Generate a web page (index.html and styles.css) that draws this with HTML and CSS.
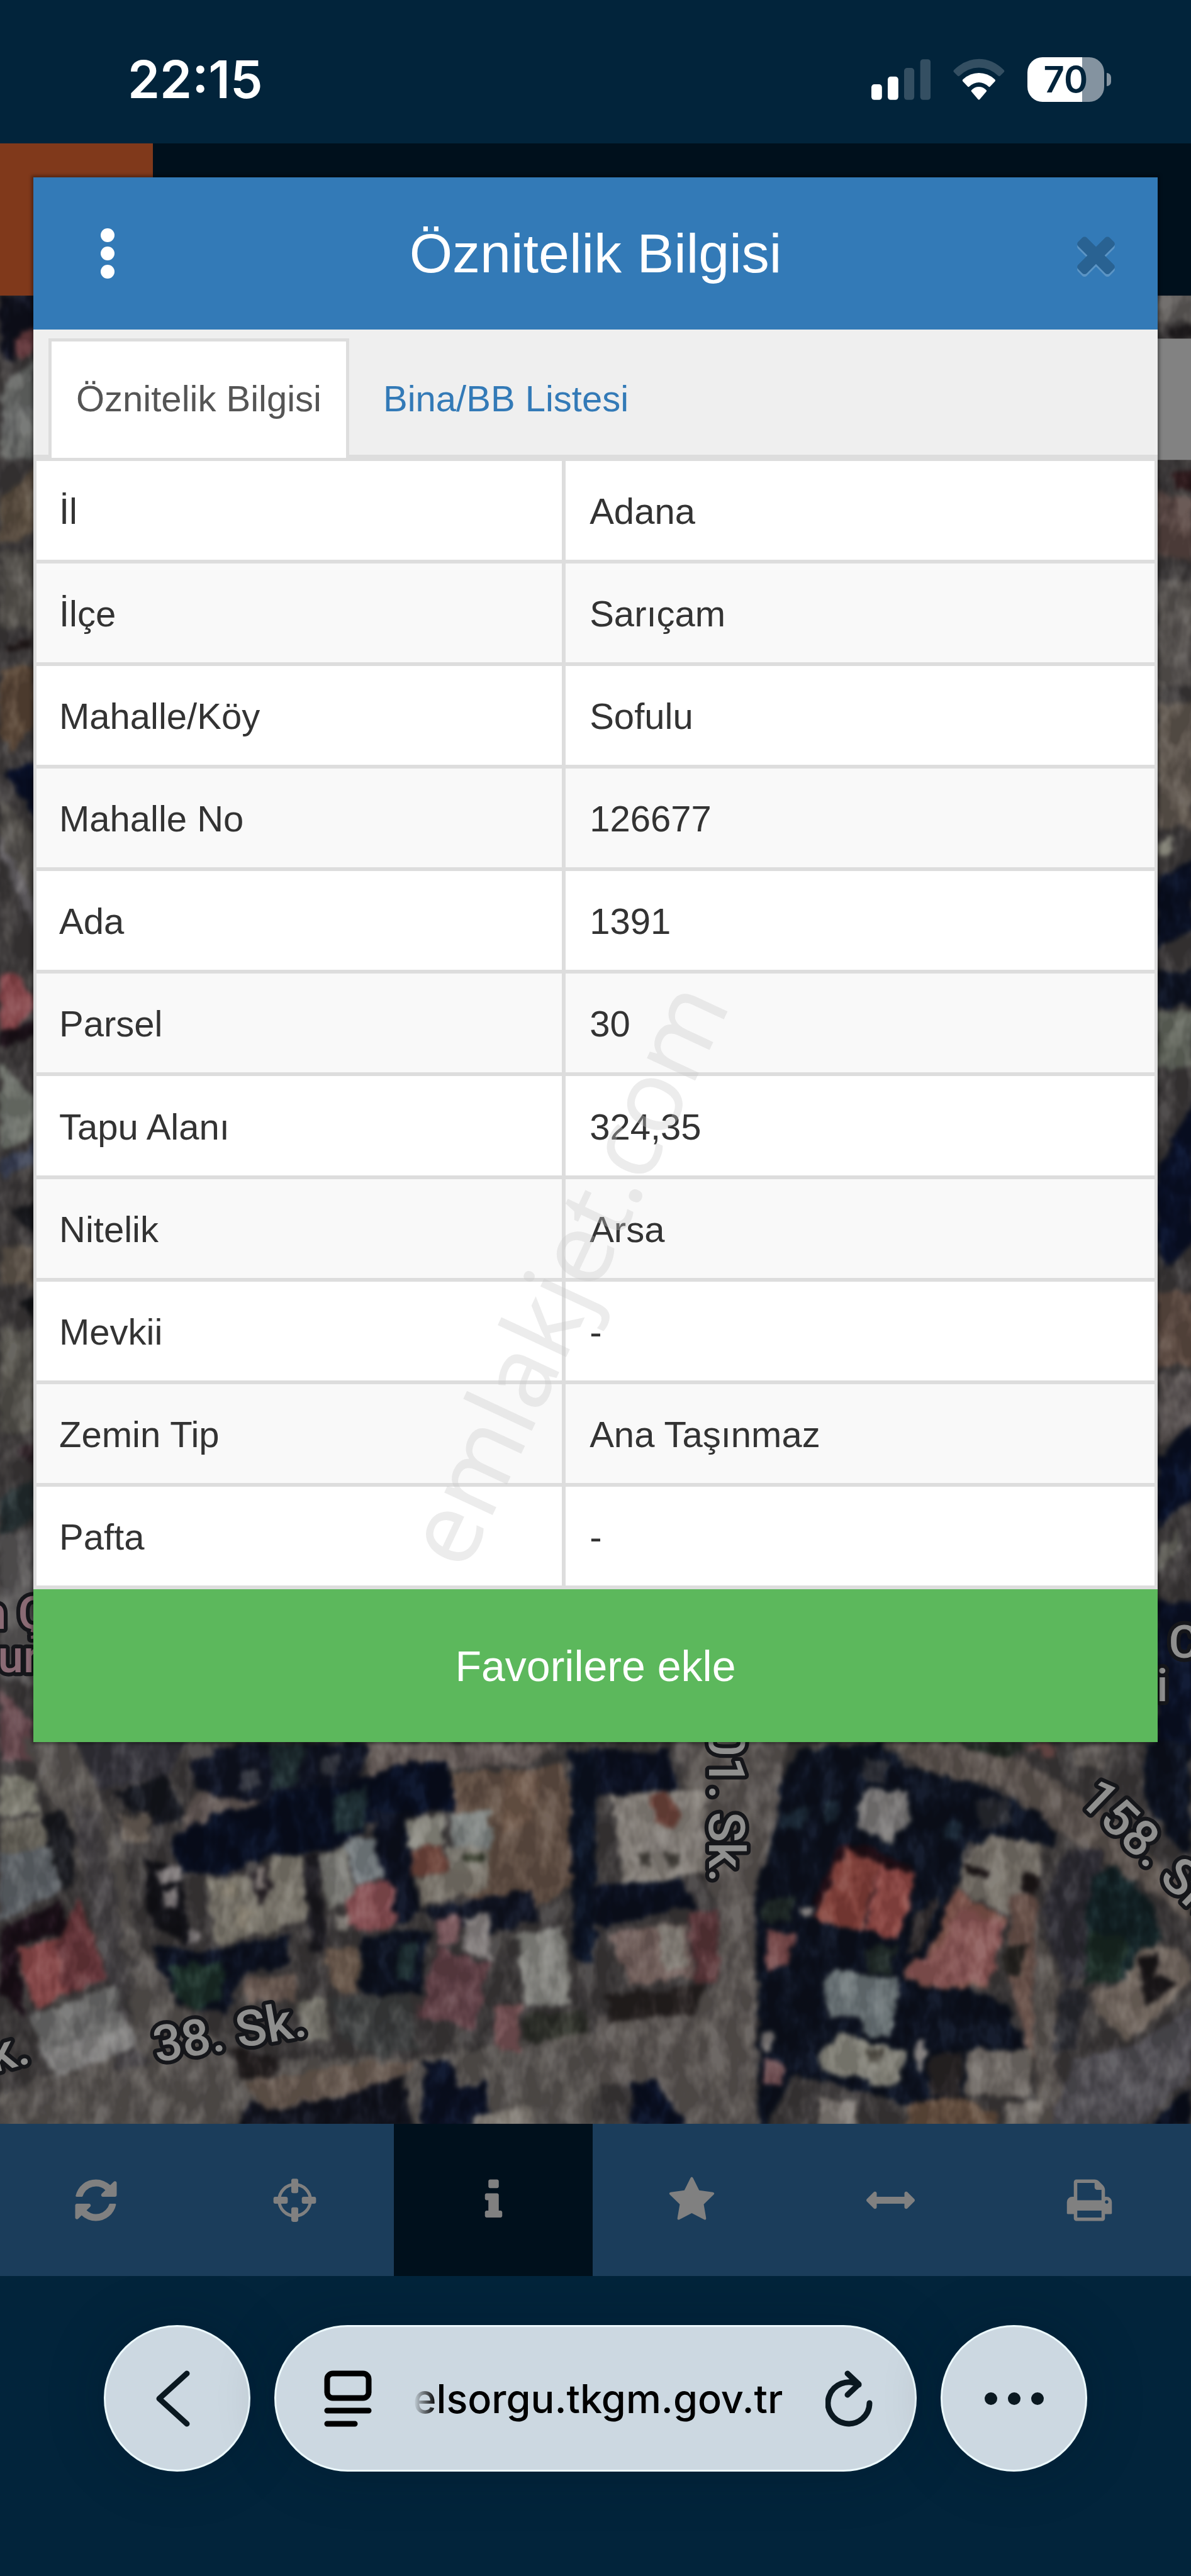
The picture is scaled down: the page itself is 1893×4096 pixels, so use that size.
FILE: index.html
```html
<!DOCTYPE html>
<html lang="tr">
<head>
    <meta charset="UTF-8">
    <meta name="viewport" content="width=device-width, initial-scale=1.0">
    <title>Parsel Sorgu - Öznitelik Bilgisi</title>
    <link rel="stylesheet" href="styles.css">
</head>
<body>
    <div class="status-bar">
        <span class="time">22:15</span>
        <div class="status-icons">
            <svg class="signal" viewBox="161 131 298 224">
                <rect x="161" y="267" width="53" height="78" rx="15"/>
                <rect x="243" y="228" width="53" height="117" rx="15"/>
                <rect class="off" x="325" y="185" width="51" height="160" rx="15"/>
                <rect class="off" x="406" y="141" width="52" height="204" rx="15"/>
            </svg>
            <svg class="wifi" viewBox="570 131 258 224">
                <path class="off" d="M573 205q-4-5 1-10q57-55 125-55t125 55q5 5 1 10l-19 19q-5 5-10 0q-44-41-97-41t-97 41q-5 5-10 0z"/>
                <path d="M618 252q-4-5 1-10q36-32 80-32t80 32q5 5 1 10l-24 25q-4 5-9 1q-22-21-48-21t-48 21q-5 4-9-1z"/>
                <path d="M662 304q-4-4 0-8q16-17 37-17t37 17q4 4 0 8l-33 38q-4 4-8 0z"/>
            </svg>
            <div class="battery"><span class="battery-level">70</span></div>
        </div>
    </div>

    <main class="site">
        <header class="site-header"><div class="logo"></div></header>

        <svg class="map" viewBox="0 529 2130 3271" preserveAspectRatio="xMidYMid slice">
            <defs>
                <filter id="rough" x="0" y="0" width="100%" height="100%" color-interpolation-filters="sRGB">
                    <feTurbulence type="fractalNoise" baseFrequency="0.04" numOctaves="3" seed="4" result="n"/>
                    <feDisplacementMap in="SourceGraphic" in2="n" scale="24" xChannelSelector="R" yChannelSelector="G"/>
                    <feGaussianBlur stdDeviation="4"/>
                    <feColorMatrix type="saturate" values="0.9"/>
                </filter>
                <filter id="grain" x="0" y="0" width="100%" height="100%" color-interpolation-filters="sRGB">
                    <feTurbulence type="fractalNoise" baseFrequency="0.03 0.018" numOctaves="3" seed="9"/>
                    <feColorMatrix type="matrix" values="2.6 0 0 0 -0.95  2.6 0 0 0 -0.96  2.5 0 0.1 0 -0.95  0 0 0 0 1"/>
                </filter>
            </defs>
            <g filter="url(#rough)">
                <rect x="-60" y="460" width="2250" height="3400" fill="#3f3c3c"/>

                <!-- left edge of the map -->
                <g transform="translate(0 500) scale(.3333 1.69)">
                    <path fill="#10121f" d="M0 15H200V50L60 90L0 75z"/>
                    <path fill="#6e3f43" d="M70 62L200 50V75L90 82z"/>
                    <path fill="#696b69" d="M20 110L200 85V190H0z"/>
                    <path fill="#5e5142" d="M0 235L200 195V270L0 280z"/>
                    <path fill="#5a5751" d="M0 290H200V370H0z"/>
                    <path fill="#1f1717" d="M40 390L180 378V388L60 396z"/>
                    <path fill="#5d4938" d="M0 410H200V470L60 500L0 480z"/>
                    <path fill="#08102a" d="M30 522L200 510V572L110 550z"/>
                    <path fill="#56534e" d="M0 550L200 590V660L0 600z"/>
                    <path fill="#6a676a" d="M0 590L200 660V690L0 610z"/>
                    <path fill="#8b464b" d="M0 735H80L190 765L80 795L0 792z"/>
                    <path fill="#1d1219" d="M0 795L200 785V802L0 812z"/>
                    <path fill="#73776f" d="M0 830L200 870V905L0 925z"/>
                    <path fill="#3c4358" d="M0 935L200 915V935L0 950z"/>
                    <path fill="#17181c" d="M60 985L200 975V1010L100 1000z"/>
                    <path fill="#141518" d="M95 1085L200 1072V1100z"/>
                    <path fill="#63594e" d="M0 1025H200V1065H0z"/>
                    <path fill="#57554e" d="M0 1110H200V1220H0z"/>
                    <path fill="#32252a" d="M100 1240L200 1225V1260z"/>
                    <path fill="#253032" d="M0 1290L200 1270V1310L0 1330z"/>
                    <path fill="#5c5a5a" d="M0 1330L200 1320V1490L0 1480z"/>
                    <path fill="#6d4d53" d="M0 1490L180 1530V1568H0z"/>
                </g>

                <!-- right edge of the map -->
                <g transform="translate(2030 500) scale(.3333 1.69)">
                    <path fill="#625f5d" d="M110 15H320V45H110z"/>
                    <path fill="#1e1b1d" d="M180 50H320V62H180z"/>
                    <path fill="#2c181a" d="M180 205L320 200V225L220 222z"/>
                    <path fill="#5b4944" d="M110 225L320 235V300L110 290z"/>
                    <path fill="#5b5754" d="M110 320H320V430H110z"/>
                    <path fill="#625950" d="M110 450H320V580H110z"/>
                    <path fill="#807f73" d="M110 600L200 590V605L110 612z"/>
                    <path fill="#091024" d="M110 635L320 612V690L110 710z"/>
                    <path fill="#0c1222" d="M110 730H320V770H110z"/>
                    <path fill="#65695f" d="M110 775H320V835H110z"/>
                    <path fill="#09112a" d="M110 945L320 870V1020L160 1050L110 1010z"/>
                    <path fill="#624f45" d="M110 1070H320V1150H110z"/>
                    <path fill="#5b5554" d="M110 1160H320V1210L110 1240z"/>
                    <path fill="#081027" d="M110 1250L320 1210V1290L110 1320z"/>
                    <path fill="#6a6961" d="M110 1350L240 1325V1345L110 1370z"/>
                    <path fill="#0a1228" d="M110 1400H320V1568H110z"/>
                </g>

                <!-- lower left block -->
                <g transform="translate(0 3080) scale(.679 .4847)">
                    <path fill="#5a5653" d="M60 60L200 60L330 500L350 760L480 1060L620 1250L1100 1240L1568 1150V1500H0V1380L330 1200L360 900L200 520z"/>
                    <path fill="#484547" d="M190 300L260 330L320 760L340 1180L400 1260L300 1300L290 940L230 640z"/>
                    <path fill="#37363e" d="M190 60H500L440 200L260 250z"/>
                    <path fill="#101423" d="M500 150L620 80H970L930 330L700 380L640 290L520 260z"/>
                    <path fill="#1c2b30" d="M710 80H800L790 230L720 250z"/>
                    <path fill="#3c3f49" d="M640 180L690 170L680 240L630 250zM850 120L910 130L880 200L840 190z"/>
                    <path fill="#161820" d="M300 270L430 190L500 380L400 380z"/>
                    <path fill="#665b57" d="M490 280L560 270L690 300L550 420H480z"/>
                    <path fill="#6b6158" d="M310 350L400 350L390 450L320 440z"/>
                    <path fill="#655b57" d="M970 75H1470L1400 150L970 200z"/>
                    <path fill="#665346" d="M1190 190L1480 160L1530 470L1520 600L1400 700L1200 640z"/>
                    <path fill="#735c4c" d="M1330 200L1420 190L1400 380L1320 420z"/>
                    <path fill="#080f22" d="M450 440L560 340L690 320L720 260L900 230L980 200L1080 150L1180 150L1200 330L1010 350L900 460L820 480L700 500L580 570L480 560z"/>
                    <path fill="#1f3137" d="M880 280L970 240L960 400L880 420z"/>
                    <path fill="#0c1120" d="M980 330H1180L1070 360L1110 700L1040 760L1000 560z"/>
                    <path fill="#8a897f" d="M1070 370L1165 345L1175 450L1160 470L1075 460z"/>
                    <path fill="#7f8482" d="M1190 335L1285 325L1300 460L1195 465z"/>
                    <path fill="#75493f" d="M1085 470L1170 460L1180 560L1090 570z"/>
                    <path fill="#7b756b" d="M1100 575L1290 530L1285 620L1110 675z"/>
                    <path fill="#7d7a70" d="M1180 460H1290V540L1180 560z"/>
                    <path fill="#373c2c" d="M1215 490L1270 480L1275 520L1220 530z"/>
                    <path fill="#101422" d="M1110 690L1400 620L1420 740L1290 780L1150 740z"/>
                    <path fill="#131318" d="M380 500L480 560L500 830L400 760z"/>
                    <path fill="#858080" d="M415 545L475 530V590L420 610zM430 620L465 610L460 690L435 700zM500 770L525 780L520 820L495 810z"/>
                    <path fill="#7b776c" d="M545 590L655 570L670 620L720 500L795 490L810 740L570 825z"/>
                    <path fill="#8a8272" d="M585 610L620 605L625 640L590 650zM640 680L670 700L640 770L620 740z"/>
                    <path fill="#252024" d="M655 570L700 530L720 620L680 680z"/>
                    <path fill="#8a817c" d="M675 540L695 535L700 620L680 640z"/>
                    <path fill="#1b1a20" d="M795 490L840 490L860 850H820z"/>
                    <path fill="#7c7c76" d="M840 490L915 455L925 670L860 690z"/>
                    <path fill="#788084" d="M915 435L985 430L1010 585L930 590z"/>
                    <path fill="#8b5054" d="M930 600L1030 590L1045 750L960 775L900 750z"/>
                    <path fill="#8f8b84" d="M890 720L925 720L915 770L885 765z"/>
                    <path fill="#0c1222" d="M410 820L520 850L760 790L770 900L640 930L600 1080L480 1040L420 930z"/>
                    <path fill="#1b302a" d="M440 900L590 890L580 1030L510 1070L460 1000z"/>
                    <path fill="#6c5c53" d="M650 950L780 930V1030L650 1040z"/>
                    <path fill="#6b5a4c" d="M860 840L950 830L940 1010L860 960z"/>
                    <path fill="#0c1220" d="M950 790L1130 770L1110 1010H950z"/>
                    <path fill="#203338" d="M1050 830L1100 820L1080 940L1040 960z"/>
                    <path fill="#825d62" d="M1155 730L1215 720L1205 830L1150 830z"/>
                    <path fill="#878281" d="M1220 720L1290 710V880L1220 850z"/>
                    <path fill="#66434a" d="M1150 840L1290 890L1250 1140L1100 1090z"/>
                    <path fill="#7b5558" d="M1305 1060L1370 1050V1220L1310 1210z"/>
                    <path fill="#868681" d="M1360 780L1480 760L1505 1040L1385 1050z"/>
                    <path fill="#3f4141" d="M870 1020L1080 1010L1100 1210L1000 1240L900 1170z"/>
                    <path fill="#2e3029" d="M1380 1080L1540 1070L1550 1160L1390 1180z"/>
                    <path fill="#727067" d="M780 1030L860 1020L870 1170L800 1180z"/>
                    <path fill="#0b1324" d="M1500 110H1568V900L1510 870z"/>
                    <path fill="#7f7e72" d="M0 200L90 210L100 320L0 370z"/>
                    <path fill="#68655b" d="M0 380L110 340L140 470L0 480z"/>
                    <path fill="#1a1b20" d="M120 340L160 330L205 450L180 640L120 560z"/>
                    <path fill="#62676c" d="M0 480L140 470L160 620L0 740z"/>
                    <path fill="#1c1018" d="M0 770L160 660L180 770L40 830L70 1100L0 1010z"/>
                    <path fill="#8e4b4c" d="M40 840L150 800L170 1010L90 1060z"/>
                    <path fill="#6c383c" d="M150 800L210 650L240 790L290 940L165 1020z"/>
                    <path fill="#6e6e6d" d="M80 1080L300 980L330 1130L110 1230z"/>
                    <path fill="#848382" d="M110 1230L335 1120L360 1200L140 1320z"/>
                    <path fill="#211d1d" d="M610 1200L730 1240L740 1330L630 1310z"/>
                    <path fill="#6a5c52" d="M640 1330L900 1270L1100 1250L1020 1350L700 1440z"/>
                    <path fill="#0a1125" d="M1120 1260L1190 1250L1210 1350L1280 1330L1290 1500H1110z"/>
                    <path fill="#11131e" d="M630 1500L650 1400L720 1440L890 1390L1060 1310L1090 1500z"/>
                    <path fill="#7f7a72" d="M1240 1500L1260 1450L1400 1420L1410 1500z"/>
                </g>

                <!-- lower right block -->
                <g transform="translate(1065 3080) scale(.679 .4847)">
                    <path fill="#5c5754" d="M210 60H500L480 380L420 620L420 1500H240L200 1400L90 1330L0 1350V1100L300 1000L330 720L290 600z"/>
                    <path fill="#0b1123" d="M0 100L190 110L220 260L0 270z"/>
                    <path fill="#86817a" d="M45 275L290 255V560L70 600z"/>
                    <path fill="#73473d" d="M150 280L190 260L230 350L210 400L160 370z"/>
                    <path fill="#3c3933" d="M110 480L150 470L145 545L120 545zM185 480L220 490L215 545L190 540z"/>
                    <path fill="#0b1122" d="M0 600L220 580L270 680L0 760z"/>
                    <path fill="#73605b" d="M35 780L240 740L260 940L90 980z"/>
                    <path fill="#807a72" d="M160 760L230 750L240 900L180 930z"/>
                    <path fill="#5e383c" d="M245 700L320 690L330 960L265 970z"/>
                    <path fill="#282322" d="M20 1010L290 970L260 1080L40 1110z"/>
                    <path fill="#0c1220" d="M540 100L750 80L830 170L1000 230L1200 360L1210 470L1090 430L980 460L900 800L980 980L1080 1040L1140 1210L980 1220L970 1420H850L800 1400L520 1300L450 1500H430L430 1130L420 640L480 380L480 240z"/>
                    <path fill="#1b2a3a" d="M490 340L560 310L550 390L490 400zM600 300L640 290L635 370L605 380zM920 370L960 360L950 440L915 450z"/>
                    <path fill="#2b2d35" d="M700 130L770 150L760 230L700 200zM1000 290L1090 290L1100 380L1010 400z"/>
                    <path fill="#202b29" d="M450 660L530 650L510 730L440 740zM710 840L790 820L780 930L720 930z"/>
                    <path fill="#2c2829" d="M850 700L910 640L860 850L820 860zM880 1230L970 1220L960 1400L880 1380z"/>
                    <path fill="#605751" d="M760 70L940 80L1130 140L1230 240L1400 400L1568 640V740L1450 620L1300 480L1210 390L1080 250L850 170z"/>
                    <path fill="#202823" d="M940 80H1180L1090 130L1010 110z"/>
                    <path fill="#76514f" d="M1120 85H1220L1200 135z"/>
                    <path fill="#67615c" d="M1270 90L1360 85L1330 180L1260 160z"/>
                    <path fill="#0c1220" d="M1450 80H1568V500L1500 420L1440 250z"/>
                    <path fill="#7b7978" d="M690 320L720 240L820 260L830 360L780 450L690 390z"/>
                    <path fill="#240f17" d="M640 470L700 450L840 550L820 560L660 490L590 690L580 660z"/>
                    <path fill="#87423b" d="M655 475L750 520L700 780L580 730z"/>
                    <path fill="#944a46" d="M750 520L850 570L790 805L710 770z"/>
                    <path fill="#82564c" d="M945 620L1080 730L1030 980L860 985L810 930L830 870L875 880z"/>
                    <path fill="#8d5857" d="M960 690L1080 740L1040 960L870 980L820 930L830 880L890 870z"/>
                    <path fill="#787269" d="M970 510L1040 420L1170 450L1180 560L1090 720L950 620z"/>
                    <path fill="#1f191a" d="M970 520L1040 560L1030 580L960 540zM1130 560L1170 580L1160 650L1120 620z"/>
                    <path fill="#6e564d" d="M1095 640L1170 650L1150 1100L1180 1270L1140 1220L1090 960z"/>
                    <path fill="#5c5652" d="M1160 720L1220 960L1210 1220L1240 1500H1170L1150 1100z"/>
                    <path fill="#24221f" d="M1085 830L1145 830L1120 930L1070 920z"/>
                    <path fill="#7b4a4b" d="M450 770L530 790L510 890L455 930z"/>
                    <path fill="#6f4c50" d="M445 1250L500 1270L490 1340L440 1335z"/>
                    <path fill="#817d7c" d="M535 680L575 680L570 720L540 715zM440 1150L465 1150V1215H440zM850 1175L872 1175L860 1280L845 1280z"/>
                    <path fill="#6c7679" d="M600 960L640 910L720 940L800 950L780 1170L710 1160L700 1100L610 1080z"/>
                    <path fill="#85847a" d="M590 1220L640 1155L820 1210L790 1350L590 1290z"/>
                    <path fill="#4d4a41" d="M715 1215L760 1210L755 1255L720 1260z"/>
                    <path fill="#756f69" d="M980 1215H1150L1140 1390L975 1370z"/>
                    <path fill="#827c76" d="M590 1390L690 1410V1500H580z"/>
                    <path fill="#66503f" d="M820 1410L970 1390L1060 1450V1500H820z"/>
                    <path fill="#7a756f" d="M1080 1410L1170 1400V1500H1080z"/>
                    <path fill="#2e2d35" d="M1240 480L1340 470L1330 560L1290 700L1290 940L1240 970L1180 750L1190 620z"/>
                    <path fill="#122226" d="M1310 560L1370 540L1470 680L1490 800L1400 960L1290 950L1290 720z"/>
                    <path fill="#1a2b25" d="M1290 780L1400 790L1390 950L1290 970z"/>
                    <path fill="#2b2c33" d="M1230 980L1300 1000L1260 1210L1210 1220z"/>
                    <path fill="#746960" d="M1310 990L1400 960L1440 820L1500 830L1568 880V960L1470 1110L1400 1180L1310 1060z"/>
                    <path fill="#1b181a" d="M1430 880L1480 850L1470 940L1540 960L1450 1060z"/>
                    <path fill="#535157" d="M1420 1200L1568 1050V1300L1430 1500H1200L1260 1250z"/>
                    <path fill="#0a0f1e" d="M1490 1440L1568 1340V1500H1470z"/>
                    <path fill="#091024" d="M100 1340L160 1320L240 1500H90z"/>
                </g>
            </g>
            <rect class="grain" x="0" y="529" width="2130" height="3271" filter="url(#grain)"/>
            <rect x="2036" y="606" width="94" height="217" fill="#828282"/>
            <g class="street">
                <text transform="translate(280 3690) rotate(-10)">38. Sk.</text>
                <text transform="translate(-12 3709) rotate(-15)">k.</text>
                <text transform="translate(1268 3368) rotate(90)" text-anchor="end">101. Sk.</text>
                <text transform="translate(1926 3222) rotate(44)">158. Sk.</text>
                <text class="place" x="-34" y="2914">n Ç</text>
                <text class="place" x="-4" y="2992">ur</text>
                <text class="place white" x="2090" y="2966">C</text>
                <text class="place white" x="2068" y="3044">i</text>
            </g>
        </svg>

        <nav class="toolbar">
            <div class="tools">
                <button class="tool" aria-label="Yenile"><svg viewBox="0 0 1792 1792"><path d="M1639 1056q0 5-1 7-64 268-268 434.500t-478 166.500q-146 0-282.500-55t-243.500-157l-129 129q-19 19-45 19t-45-19-19-45v-448q0-26 19-45t45-19h448q26 0 45 19t19 45-19 45l-137 137q71 66 161 102t187 36q134 0 250-65t186-179q11-17 53-117 8-23 30-23h192q13 0 22.500 9.500t9.500 22.500zm25-800v448q0 26-19 45t-45 19h-448q-26 0-45-19t-19-45 19-45l138-138q-148-137-349-137-134 0-250 65t-186 179q-11 17-53 117-8 23-30 23h-199q-13 0-22.500-9.500t-9.500-22.500v-7q65-268 270-434.500t480-166.500q146 0 284 55.500t245 156.500l130-129q19-19 45-19t45 19 19 45z"/></svg></button>
                <button class="tool" aria-label="Konum"><svg viewBox="0 0 1792 1792"><circle cx="896" cy="896" r="580" fill="none" stroke="#808080" stroke-width="116"/><rect x="768" y="96" width="256" height="540" rx="70"/><rect x="768" y="1156" width="256" height="540" rx="70"/><rect x="108" y="768" width="528" height="256" rx="70"/><rect x="1156" y="768" width="528" height="256" rx="70"/></svg></button>
                <button class="tool active" aria-label="Bilgi"><svg viewBox="0 0 1792 1792"><path d="M1216 1344v128q0 26-19 45t-45 19h-512q-26 0-45-19t-19-45v-128q0-26 19-45t45-19h64v-384h-64q-26 0-45-19t-19-45v-128q0-26 19-45t45-19h384q26 0 45 19t19 45v576h64q26 0 45 19t19 45zm-128-1152v192q0 26-19 45t-45 19h-256q-26 0-45-19t-19-45v-192q0-26 19-45t45-19h256q26 0 45 19t19 45z"/></svg></button>
                <button class="tool" aria-label="Favoriler"><svg viewBox="0 0 1792 1792"><path d="M1728 647q0 22-26 48l-363 354 86 500q1 7 1 20 0 21-10.500 35.500t-30.500 14.500q-19 0-40-12l-449-236-449 236q-22 12-40 12-21 0-31.500-14.500t-10.500-35.500q0-6 2-20l86-500-364-354q-25-27-25-48 0-37 56-46l502-73 225-455q19-41 49-41t49 41l225 455 502 73q56 9 56 46z"/></svg></button>
                <button class="tool" aria-label="Ölç"><svg viewBox="0 0 1792 1792"><path d="M1792 896q0 26-19 45l-256 256q-19 19-45 19t-45-19-19-45v-128h-1024v128q0 26-19 45t-45 19-45-19l-256-256q-19-19-19-45t19-45l256-256q19-19 45-19t45 19 19 45v128h1024v-128q0-26 19-45t45-19 45 19l256 256q19 19 19 45z"/></svg></button>
                <button class="tool" aria-label="Yazdır"><svg viewBox="0 0 1792 1792"><path d="M448 1536h896v-256h-896v256zm0-640h896v-384h-160q-40 0-68-28t-28-68v-160h-640v640zm1152 64q0-26-19-45t-45-19-45 19-19 45 19 45 45 19 45-19 19-45zm128 0v416q0 13-9.500 22.500t-22.500 9.500h-224v160q0 40-28 68t-68 28h-960q-40 0-68-28t-28-68v-160h-224q-13 0-22.500-9.500t-9.500-22.500v-416q0-79 56.500-135.500t135.500-56.500h64v-544q0-40 28-68t68-28h672q40 0 88 20t76 48l152 152q28 28 48 76t20 88v256h64q79 0 135.500 56.500t56.500 135.500z"/></svg></button>
            </div>
        </nav>

        <section class="modal">
            <div class="modal-header">
                <button class="menu" aria-label="Menü"><svg viewBox="0 0 22 80"><circle cx="11" cy="11" r="11"/><circle cx="11" cy="40" r="11"/><circle cx="11" cy="69" r="11"/></svg></button>
                <h1>Öznitelik Bilgisi</h1>
                <button class="close" aria-label="Kapat"><svg viewBox="0 0 1792 1792"><path d="M1490 1322q0 40-28 68l-136 136q-28 28-68 28t-68-28l-294-294-294 294q-28 28-68 28t-68-28l-136-136q-28-28-28-68t28-68l294-294-294-294q-28-28-28-68t28-68l136-136q28-28 68-28t68 28l294 294 294-294q28-28 68-28t68 28l136 136q28 28 28 68t-28 68l-294 294 294 294q28 28 28 68z"/></svg></button>
            </div>
            <div class="tabs">
                <a class="tab active" href="#oznitelik">Öznitelik Bilgisi</a>
                <a class="tab" href="#bina">Bina/BB Listesi</a>
            </div>
            <table class="info" id="oznitelik">
                <tr><th scope="row">İl</th><td>Adana</td></tr>
                <tr><th scope="row">İlçe</th><td>Sarıçam</td></tr>
                <tr><th scope="row">Mahalle/Köy</th><td>Sofulu</td></tr>
                <tr><th scope="row">Mahalle No</th><td>126677</td></tr>
                <tr><th scope="row">Ada</th><td>1391</td></tr>
                <tr><th scope="row">Parsel</th><td>30</td></tr>
                <tr><th scope="row">Tapu Alanı</th><td>324,35</td></tr>
                <tr><th scope="row">Nitelik</th><td>Arsa</td></tr>
                <tr><th scope="row">Mevkii</th><td>-</td></tr>
                <tr><th scope="row">Zemin Tip</th><td>Ana Taşınmaz</td></tr>
                <tr><th scope="row">Pafta</th><td>-</td></tr>
            </table>
            <button class="favorite">Favorilere ekle</button>
            <svg class="watermark" viewBox="0 0 1786 2488"><text transform="translate(686 2220) rotate(-65)">emlakjet.com</text></svg>
        </section>
    </main>

    <div class="browser-bar">
        <button class="round" aria-label="Geri"><svg viewBox="0 0 90 90"><path d="M60 5L16 45L60 85"/></svg></button>
        <div class="address">
            <button class="page-menu" aria-label="Sayfa menüsü"><svg viewBox="0 0 76 90"><rect x="5" y="5" width="66" height="39" rx="9"/><path d="M5 64H71M5 85H49"/></svg></button>
            <input class="url" type="text" value="elsorgu.tkgm.gov.tr" aria-label="Adres">
            <button class="reload" aria-label="Yeniden yükle"><svg viewBox="0 0 76 90"><path d="M70 52A33 33 0 1 1 53 23M35 5L53 22L35 39"/></svg></button>
        </div>
        <button class="round more" aria-label="Diğer"><svg viewBox="0 0 94 20"><circle cx="10" cy="10" r="10"/><circle cx="47" cy="10" r="10"/><circle cx="84" cy="10" r="10"/></svg></button>
    </div>
</body>
</html>
```

FILE: styles.css
```css
* {
    box-sizing: border-box;
}

body {
    margin: 0;
    min-height: 100vh;
    display: flex;
    flex-direction: column;
    background-color: #02243b;
    font-family: "Liberation Sans", Arial, sans-serif;
    font-size: 58px;
    color: #333;
    overflow-x: hidden;
}

button {
    padding: 0;
    border: none;
    background: none;
    font-family: inherit;
    cursor: pointer;
}

svg {
    display: block;
}

/* status bar */
.status-bar {
    height: 228px;
    padding: 24px 138px 0 203px;
    display: flex;
    align-items: center;
    justify-content: space-between;
}

.time {
    font-family: Inter, sans-serif;
    font-size: 82px;
    font-weight: 600;
    color: #fff;
}

.status-icons {
    display: flex;
    align-items: center;
    gap: 36px;
}

.status-icons svg {
    height: 71px;
    fill: #fff;
}

.status-icons .off {
    fill: #344f62;
}

.battery {
    position: relative;
    width: 122px;
    height: 71px;
    border-radius: 24px;
    background: linear-gradient(to right, #fff 71%, #8493a0 71%);
    display: flex;
    align-items: center;
    justify-content: center;
}

.battery::after {
    content: "";
    position: absolute;
    left: 126px;
    top: 25px;
    width: 7px;
    height: 21px;
    border-radius: 0 7px 7px 0;
    background-color: #8493a0;
}

.battery-level {
    font-family: Inter, sans-serif;
    font-size: 58px;
    font-weight: 600;
    line-height: 71px;
    color: #02243b;
}

/* page under the dialog */
.site {
    position: relative;
    flex: 1;
    display: flex;
    flex-direction: column;
}

.site-header {
    height: 242px;
    background-color: #00101c;
}

.logo {
    width: 243px;
    height: 100%;
    background-color: #80391b;
}

.map {
    flex: 1;
    width: 100%;
    min-height: 0;
}

.grain {
    opacity: 0.28;
    mix-blend-mode: soft-light;
}

.street {
    font-family: Roboto, sans-serif;
    font-size: 90px;
    font-weight: 500;
    fill: #8f8f8e;
    stroke: #15161a;
    stroke-width: 14px;
    stroke-linejoin: round;
    paint-order: stroke;
}

.street .place {
    font-size: 82px;
    fill: #8a6a74;
}

.street .place.white {
    fill: #8f8f8e;
}

.toolbar {
    height: 242px;
    background-color: #1b3d5b;
}

.tools {
    height: 100%;
    margin: 0 4px 0 -5px;
    display: grid;
    grid-template-columns: repeat(6, 1fr);
}

.tool {
    display: flex;
    align-items: center;
    justify-content: center;
}

.tool.active {
    background-color: #00101c;
}

.tool svg {
    width: 77px;
    height: 77px;
    fill: #808080;
}

/* dialog */
.modal {
    position: absolute;
    top: 54px;
    left: 53px;
    right: 53px;
    background-color: #efefef;
    box-shadow: 0 0 5px 3px rgba(0, 0, 0, 0.35);
}

.modal-header {
    height: 242px;
    padding: 0 53px 0 107px;
    display: grid;
    grid-template-columns: 90px 1fr 90px;
    align-items: center;
    background-color: #337ab7;
}

.menu svg {
    width: 22px;
    height: 80px;
    fill: #fff;
}

h1 {
    margin: 0;
    padding-right: 54px;
    font-size: 88px;
    font-weight: normal;
    text-align: center;
    color: #fff;
}

.close svg {
    width: 90px;
    height: 90px;
    fill: #296292;
    filter: drop-shadow(0 4px 0 #5c95c5);
}

.tabs {
    height: 204px;
    padding: 14px 24px 0;
    display: flex;
    border-bottom: 5px solid #ddd;
}

.tab {
    height: 190px;
    padding: 0 39px;
    border: 5px solid transparent;
    border-bottom: none;
    line-height: 182px;
    color: #337ab7;
    text-decoration: none;
}

.tab + .tab {
    margin-left: 10px;
}

.tab.active {
    background-color: #fff;
    border-color: #ddd;
    color: #555;
}

.info {
    width: 100%;
    height: 1799px;
    border: 5px solid #ddd;
    border-bottom: none;
    border-collapse: separate;
    border-spacing: 0;
    background-color: #fff;
    table-layout: fixed;
}

.info th,
.info td {
    padding: 2px 38px 0;
    border-bottom: 6px solid #ddd;
    font-weight: normal;
    text-align: left;
}

.info th {
    width: 47%;
    padding-left: 36px;
}

.info td {
    border-left: 6px solid #ddd;
}

.info tr:nth-child(even) {
    background-color: #f9f9f9;
}

.favorite {
    display: block;
    width: 100%;
    height: 243px;
    background-color: #5cb85c;
    font-size: 68px;
    color: #fff;
}

.watermark {
    position: absolute;
    inset: 0;
    width: 100%;
    height: 100%;
    pointer-events: none;
    font-family: "Noto Sans", sans-serif;
    font-size: 158px;
    fill: rgba(200, 200, 200, 0.35);
}

/* browser controls */
.browser-bar {
    height: 477px;
    padding: 78px 165px 0;
    display: flex;
    align-items: flex-start;
    gap: 38px;
}

.round,
.address {
    height: 233px;
    border: 3px solid #ecf9fd;
    border-radius: 117px;
    background-color: #ccd8e1;
    box-shadow: 0 0 90px rgba(0, 20, 30, 0.25);
}

.round {
    width: 233px;
    flex: none;
    display: flex;
    align-items: center;
    justify-content: center;
}

.round svg,
.address svg {
    height: 90px;
    fill: none;
    stroke: #0a1820;
    stroke-width: 9px;
    stroke-linecap: round;
    stroke-linejoin: round;
}

.round.more svg {
    height: 20px;
    fill: #0a1820;
    stroke: none;
}

.address {
    flex: 1;
    min-width: 0;
    padding: 0 66px 0 76px;
    display: flex;
    align-items: center;
    justify-content: space-between;
}

.address .page-menu svg {
    stroke: #000;
}

.url {
    width: 590px;
    padding: 0;
    border: none;
    outline: none;
    background: none;
    font-family: Inter, sans-serif;
    font-size: 63px;
    font-weight: 500;
    color: #000;
    mask-image: linear-gradient(to right, transparent, #000 36px);
}
```
